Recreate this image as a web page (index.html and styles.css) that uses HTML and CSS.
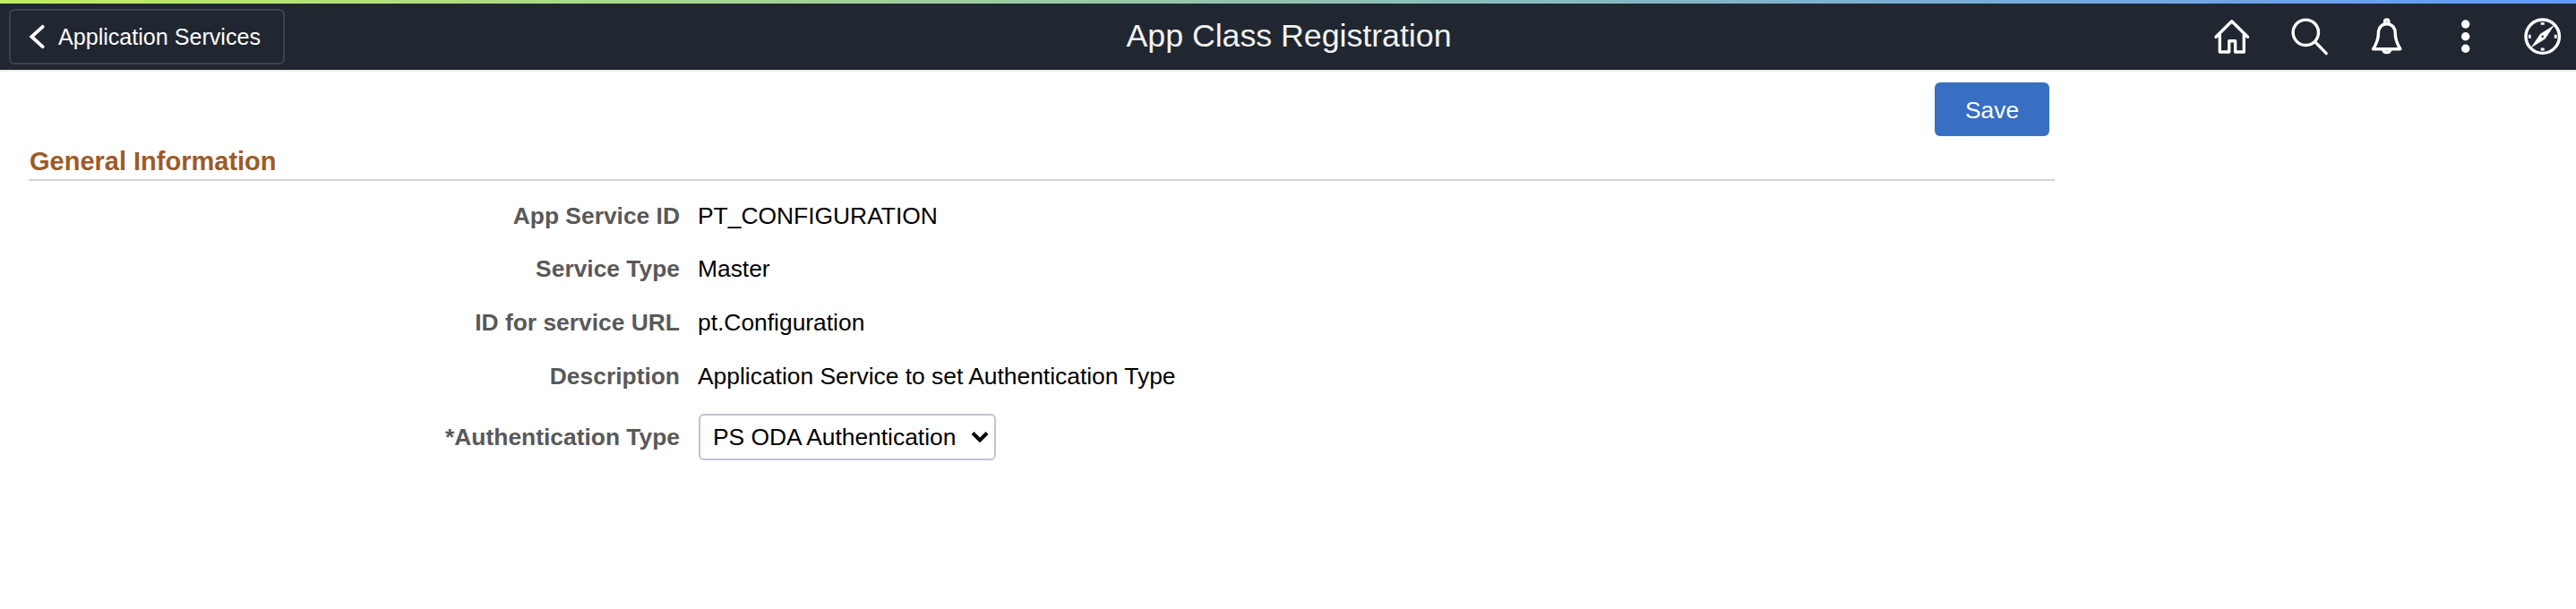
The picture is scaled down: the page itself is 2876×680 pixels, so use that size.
FILE: index.html
```html
<!DOCTYPE html>
<html lang="en">
<head>
<meta charset="utf-8">
<title>App Class Registration</title>
<link rel="stylesheet" href="styles.css">
</head>
<body>
<header class="banner">
  <button class="back" type="button">
    <svg class="chevron" viewBox="0 0 18 28"><path d="M15.6 2.8 3.300 14l12.300 11.200"/></svg>
    <span class="back-text">Application Services</span>
  </button>
  <h1 class="title">App Class Registration</h1>
  <nav class="tools">
    <svg class="icon" viewBox="0 0 44 44"><path d="M4 22.300 21.700 4.800 39.500 22.300M8.300 19v20h10.400V26.700h6.900V39h9.700V19"/></svg>
    <svg class="icon" viewBox="0 0 44 44"><circle cx="17.300" cy="17.300" r="14.200"/><path d="m27.600 27.600 12.600 13"/></svg>
    <svg class="icon" viewBox="0 0 44 44"><circle cx="20.700" cy="5.200" r="2.200"/><path d="M5.500 35.700C9 30.500 11.400 25 11.400 18c0-6.200 3.800-10.300 9.300-10.300S30.200 11.800 30.200 18c0 7 2.300 12.500 5.700 17.700zM16.900 37.300a3.900 3 0 0 0 7.600 0"/></svg>
    <svg class="icon dots" viewBox="0 0 44 44"><circle cx="21.700" cy="8" r="4.700"/><circle cx="21.700" cy="21.700" r="4.700"/><circle cx="21.700" cy="35.300" r="4.700"/></svg>
    <svg class="icon" viewBox="0 0 44 44"><circle cx="20.700" cy="21.700" r="18.700"/><path class="needle" fill-rule="evenodd" d="M34 8.800 23.500 24.500 7.500 34.600 17.900 18.900zM20.700 20.500a1.200 1.200 0 1 0 0 2.400 1.200 1.200 0 0 0 0-2.400z"/><path class="ticks" d="M18.700 7.300h4M18.700 36h4M6.300 19.700v4M35.200 19.700v4"/></svg>
  </nav>
</header>
<main class="page">
  <div class="actions"><button class="save" type="button">Save</button></div>
  <h2 class="section">General Information</h2>
  <div class="fields">
    <span class="label">App Service ID</span><span class="value">PT_CONFIGURATION</span>
    <span class="label">Service Type</span><span class="value">Master</span>
    <span class="label">ID for service URL</span><span class="value">pt.Configuration</span>
    <span class="label">Description</span><span class="value">Application Service to set Authentication Type</span>
    <span class="label">*Authentication Type</span>
    <div class="select"><span>PS ODA Authentication</span><svg class="arrow" viewBox="0 0 20 14"><path d="m2 2.500 8 8 8-8"/></svg></div>
  </div>
</main>
</body>
</html>
```
FILE: styles.css
```css
* { box-sizing: border-box; }
body {
  margin: 0;
  background: #fff;
  color: #000;
  font-family: "Liberation Sans", Arial, sans-serif;
  font-size: 26.4px;
}
button { font: inherit; margin: 0; }
.banner {
  display: grid;
  grid-template-columns: 1fr auto 1fr;
  align-items: start;
  height: 80px;
  padding: 10px 14px 0 10px;
  background: linear-gradient(90deg, #bfeb66, #619afa) top / 100% 4px no-repeat, #202731;
  border-bottom: 2px solid #f1efed;
}
.back {
  display: flex;
  align-items: center;
  gap: 15px;
  width: 308px;
  height: 62px;
  padding: 0 0 0 20px;
  border: 2px solid #3e434e;
  border-radius: 6px;
  background: none;
  color: #fff;
  font-size: 25.100px;
}
.chevron {
  width: 18px;
  height: 28px;
  fill: none;
  stroke: #fff;
  stroke-width: 3.8;
  stroke-linecap: round;
}
.back-text { line-height: 30px; white-space: nowrap; }
.title {
  margin: 9px 0 0 6px;
  color: #f3f3f3;
  font-size: 35.700px;
  font-weight: 400;
  line-height: 42px;
}
.tools {
  display: flex;
  justify-content: flex-end;
  gap: 43px;
  padding-top: 9px;
}
.icon {
  width: 44px;
  height: 44px;
  fill: none;
  stroke: #fff;
  stroke-width: 3.400;
  stroke-linecap: round;
  stroke-linejoin: round;
}
.dots, .needle { fill: #fff; stroke: none; }
.ticks { stroke-width: 2.800; stroke-linecap: butt; }
.page { width: 2294px; padding: 12px 0 0 32px; }
.actions { display: flex; justify-content: flex-end; padding-right: 6px; }
.save {
  width: 128px;
  height: 60px;
  padding: 2px 0 0;
  border: 0;
  border-radius: 6px;
  background: #386fc3;
  color: #fff;
}
.section {
  height: 50px;
  margin: 0;
  padding: 11px 0 0 1px;
  border-bottom: 2px solid #cfd4d8;
  color: #9d5a28;
  font-size: 29px;
  line-height: 34px;
}
.fields {
  display: grid;
  grid-template-columns: 727px auto;
  grid-template-rows: 58px 60px 60px 60px 76px;
  column-gap: 20px;
  align-items: center;
  justify-content: start;
  padding-top: 10px;
}
.label {
  color: #595959;
  font-weight: 700;
  line-height: 30px;
  text-align: right;
}
.value { line-height: 30px; }
.select {
  display: flex;
  align-items: center;
  justify-content: space-between;
  width: 332px;
  height: 52px;
  margin-left: 1px;
  padding: 0 6px 0 14px;
  border: 2px solid #bfc4ce;
  border-radius: 6px;
}
.arrow { width: 20px; height: 14px; fill: none; stroke: #000; stroke-width: 4; }
```
